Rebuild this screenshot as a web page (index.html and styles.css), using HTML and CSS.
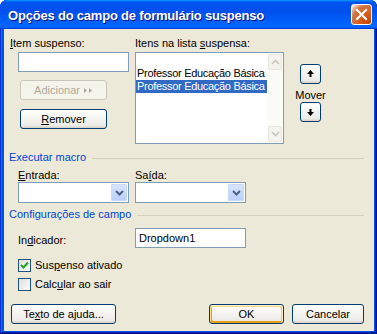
FILE: index.html
```html
<!DOCTYPE html>
<html lang="pt">
<head>
<meta charset="utf-8">
<title>Opções do campo de formulário suspenso</title>
<link rel="stylesheet" href="styles.css">
</head>
<body>
<div class="window">
  <div class="titlebar">
    <span class="title">Opções do campo de formulário suspenso</span>
    <div class="close">
      <svg width="13" height="13" viewBox="0 0 13 13"><path d="M2 2 L11 11 M11 2 L2 11" stroke="#fff" stroke-width="2.2" stroke-linecap="square"/></svg>
    </div>
  </div>
  <div class="client">
    <div class="top">
      <div class="col-left">
        <div class="label"><u>I</u>tem suspenso:</div>
        <div class="textbox item-box"></div>
        <div class="btn disabled add-btn">Adicionar <span class="dbl">
          <svg width="10" height="7" viewBox="0 0 10 7"><path d="M1 1 L4 3.5 L1 6 Z M6 1 L9 3.5 L6 6 Z" fill="#aca899"/></svg></span></div>
        <div class="btn remove-btn"><u>R</u>emover</div>
      </div>
      <div class="col-list">
        <div class="label">Itens na lista <u>s</u>uspensa:</div>
        <div class="listbox">
          <div class="items">
            <div class="item"></div>
            <div class="item">Professor Educação Básica</div>
            <div class="item sel">Professor Educação Básica</div>
          </div>
          <div class="vscroll">
            <div class="sbtn"><svg width="9" height="6" viewBox="0 0 9 6"><path d="M1 5 L4.5 1.5 L8 5" fill="none" stroke="#c9c7ba" stroke-width="1.6"/></svg></div>
            <div class="strack"></div>
            <div class="sbtn"><svg width="9" height="6" viewBox="0 0 9 6"><path d="M1 1 L4.5 4.5 L8 1" fill="none" stroke="#c9c7ba" stroke-width="1.6"/></svg></div>
          </div>
        </div>
      </div>
      <div class="col-mover">
        <div class="btn arrow-btn"><svg width="7" height="8" viewBox="0 0 7 8"><path d="M3.5 0 L7 4 L0 4 Z" fill="#000"/><rect x="2.5" y="4" width="2" height="3" fill="#000"/></svg></div>
        <div class="mover-label">Mover</div>
        <div class="btn arrow-btn"><svg width="7" height="8" viewBox="0 0 7 8"><rect x="2.5" y="1" width="2" height="3" fill="#000"/><path d="M3.5 8 L7 4 L0 4 Z" fill="#000"/></svg></div>
      </div>
    </div>

    <div class="section"><span class="section-title">Executar macro</span><span class="section-line"></span></div>
    <div class="macro-row">
      <div class="field">
        <div class="label"><u>E</u>ntrada:</div>
        <div class="combo">
          <div class="combo-btn"><svg width="9" height="6" viewBox="0 0 9 6"><path d="M1 1 L4.5 4.5 L8 1" fill="none" stroke="#4d6185" stroke-width="2"/></svg></div>
        </div>
      </div>
      <div class="field">
        <div class="label">Sa<u>í</u>da:</div>
        <div class="combo">
          <div class="combo-btn"><svg width="9" height="6" viewBox="0 0 9 6"><path d="M1 1 L4.5 4.5 L8 1" fill="none" stroke="#4d6185" stroke-width="2"/></svg></div>
        </div>
      </div>
    </div>

    <div class="section sec2"><span class="section-title">Configurações de campo</span><span class="section-line"></span></div>
    <div class="indicator-row">
      <div class="label ind-label">In<u>d</u>icador:</div>
      <div class="textbox ind-box">Dropdown1</div>
    </div>
    <div class="check-row first">
      <span class="checkbox"><svg width="9" height="9" viewBox="0 0 9 9"><path d="M1 4 L3.5 6.5 L8 1.5" fill="none" stroke="#21a121" stroke-width="2"/></svg></span>
      <span class="check-label">Sus<u>p</u>enso ativado</span>
    </div>
    <div class="check-row second">
      <span class="checkbox"></span>
      <span class="check-label">Calc<u>u</u>lar ao sair</span>
    </div>

    <div class="footer">
      <div class="btn help-btn">Te<u>x</u>to de ajuda...</div>
      <div class="spacer"></div>
      <div class="btn ok-btn">OK</div>
      <div class="btn cancel-btn">Cancelar</div>
    </div>
  </div>
</div>
</body>
</html>
```

FILE: styles.css
```css
html, body {
  margin: 0;
  padding: 0;
  background: #ffffff;
}
body {
  font-family: "Liberation Sans", Arial, sans-serif;
  font-size: 11px;
  line-height: 13px;
  color: #000;
}
u { text-decoration: underline; text-underline-offset: 1px; }

.window {
  width: 377px;
  height: 334px;
  box-sizing: border-box;
  display: flex;
  flex-direction: column;
  background: #0054e3;
  border-radius: 7px 7px 0 0;
  box-shadow: inset -1px -1px #00138c, inset 1px 1px #0831d9, inset -2px -2px #001ea0, inset 2px 2px #166aee;
  overflow: hidden;
}

.titlebar {
  height: 29px;
  flex: none;
  display: flex;
  align-items: center;
  justify-content: space-between;
  padding: 0 5px 0 8px;
  border-radius: 7px 7px 0 0;
  background: linear-gradient(180deg, #0997ff, #0053ee 8%, #0050ee 40%, #0066ff 88%, #0066ff 93%, #005bff 95%, #003dd7 96%, #003dd7);
}
.title {
  color: #fff;
  font-weight: bold;
  font-size: 13px;
  letter-spacing: -0.2px;
  text-shadow: 1px 1px #0f1089;
  margin-top: 1px;
}
.close {
  width: 19px;
  height: 19px;
  border: 1px solid #fff;
  border-radius: 3px;
  display: flex;
  align-items: center;
  justify-content: center;
  background: radial-gradient(circle at 90% 90%, #cc4600 0, #dc6527 55%, #cd7546 70%, #ffccb2 90%, #fff 100%);
}

.client {
  flex: 1;
  margin: 0 3px 3px 4px;
  background: #ece9d8;
  padding: 8px 10px 0 6px;
  display: flex;
  flex-direction: column;
}

.label { height: 13px; white-space: nowrap; }

.top { display: flex; height: 107px; }
.col-left { width: 125px; display: flex; flex-direction: column; }
.textbox {
  box-sizing: border-box;
  height: 20px;
  border: 1px solid #7f9db9;
  background: #fff;
  padding: 2px 3px;
  line-height: 14px;
}
.item-box { width: 111px; margin: 2px 0 0 8px; }

.btn {
  box-sizing: border-box;
  display: flex;
  align-items: center;
  justify-content: center;
  height: 20px;
  border: 1px solid #003c74;
  border-radius: 3px;
  background: linear-gradient(180deg, #fff, #ecebe6 86%, #d6d0c5);
  white-space: nowrap;
}
.btn.disabled {
  border-color: #c9c7ba;
  color: #aca899;
  background: #f5f4ea;
}
.add-btn { width: 87px; margin: 8px 0 0 10px; }
.dbl { display: inline-flex; margin-left: 3px; }
.remove-btn { width: 87px; margin: 9px 0 0 10px; }

.col-list { width: 149px; display: flex; flex-direction: column; }
.listbox {
  box-sizing: border-box;
  margin-top: 2px;
  width: 149px;
  height: 92px;
  border: 1px solid #7f9db9;
  background: #fff;
  display: flex;
}
.items { flex: 1; min-width: 0; padding-top: 1px; }
.item { height: 13px; line-height: 13px; padding-left: 1px; white-space: nowrap; letter-spacing: -0.3px; }
.item.sel { background: #316ac5; color: #fff; }
.vscroll {
  width: 16px;
  flex: none;
  display: flex;
  flex-direction: column;
  background: #fbfbf8;
}
.sbtn {
  box-sizing: border-box;
  height: 16px;
  margin: 1px;
  border: 1px solid #e8e7de;
  border-radius: 2px;
  background: #f4f3ee;
  display: flex;
  align-items: center;
  justify-content: center;
}
.strack { flex: 1; }

.col-mover {
  width: 33px;
  margin-left: 10px;
  display: flex;
  flex-direction: column;
  align-items: center;
}
.arrow-btn { width: 21px; height: 20px; }
.col-mover .arrow-btn:first-child { margin-top: 27px; }
.mover-label { margin-top: 5px; height: 13px; }

.section {
  display: flex;
  align-items: center;
  margin: 7px 0 0 -1px;
  height: 13px;
}
.section-title { color: #0046d5; white-space: nowrap; }
.section-line { flex: 1; height: 0; border-top: 1px solid #d0d0bf; margin: 1px 0 0 6px; }
.sec2 { margin-top: 5px; }

.macro-row { display: flex; margin-top: 5px; padding-left: 8px; gap: 6px; }
.field { display: flex; flex-direction: column; width: 111px; }
.combo {
  box-sizing: border-box;
  height: 21px;
  border: 1px solid #7f9db9;
  background: #fff;
  display: flex;
  justify-content: flex-end;
  padding: 1px;
}
.combo-btn {
  width: 16px;
  border-radius: 2px;
  background: linear-gradient(180deg, #dbe6fe, #b9cefb);
  box-shadow: inset 0 0 0 1px #c8d7fc;
  display: flex;
  align-items: center;
  justify-content: center;
}

.indicator-row { display: flex; margin-top: 7px; padding-left: 8px; align-items: flex-start; }
.ind-label { width: 117px; margin-top: 6px; }
.ind-box { width: 111px; }

.check-row { display: flex; align-items: flex-start; padding-left: 8px; height: 13px; }
.check-row.first { margin-top: 11px; }
.check-row.second { margin-top: 6px; }
.checkbox {
  box-sizing: border-box;
  width: 13px;
  height: 13px;
  border: 1px solid #1c5180;
  background: linear-gradient(135deg, #dcdcd7, #fff);
  display: flex;
  align-items: center;
  justify-content: center;
}
.check-label { margin-left: 4px; }

.footer { display: flex; margin-top: 13px; padding-left: 1px; }
.spacer { flex: 1; }
.help-btn { width: 105px; }
.ok-btn {
  width: 75px;
  box-shadow: inset -1px 1px #fff0cf, inset 1px 2px #fdd889, inset -2px 2px #fbc761, inset 2px -2px #e5a01a;
}
.cancel-btn { width: 72px; margin-left: 8px; }
```
